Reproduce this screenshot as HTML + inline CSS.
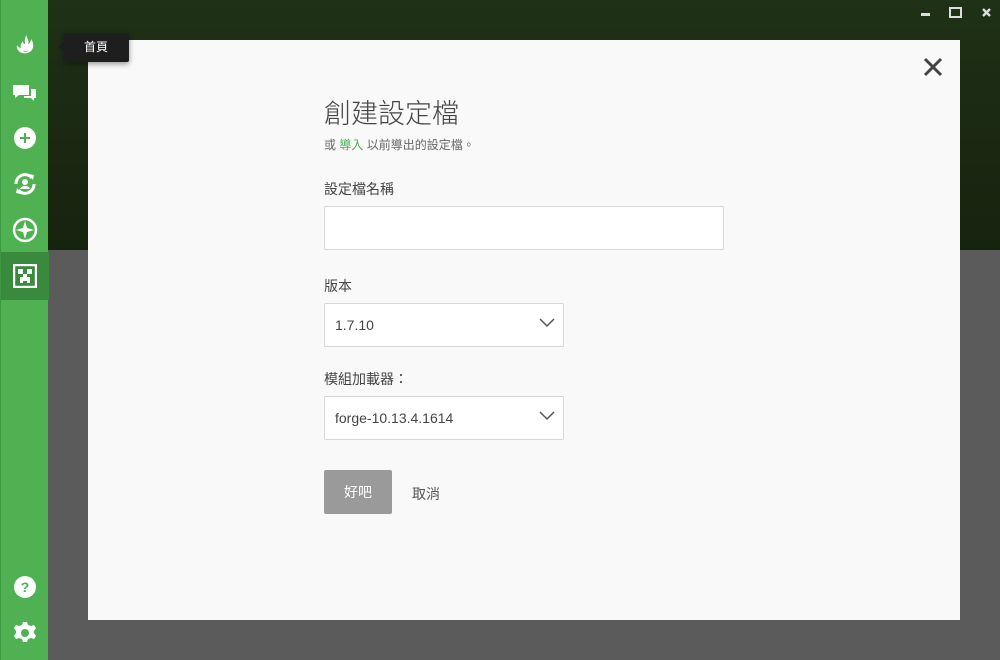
<!DOCTYPE html>
<html><head><meta charset="utf-8"><style>
*{margin:0;padding:0;box-sizing:border-box}
body{width:1000px;height:660px;overflow:hidden;position:relative;background:#5b5b5b;font-family:"Liberation Sans","Noto Sans CJK TC",sans-serif}
.top{position:absolute;left:0;top:0;width:1000px;height:250px;background:linear-gradient(180deg,#1f3117 0%,#1a2812 60%,#16230f 100%)}
.side{position:absolute;left:0;top:0;width:48px;height:660px;background:#4fb152;border-left:1px solid #3e9a41}
.ic{position:absolute;left:0;width:48px;height:46px;display:flex;align-items:center;justify-content:center}
.sel{background:#3a8a3d}
.tip{position:absolute;z-index:5;left:64px;top:33px;width:65px;height:29px;background:#1e1e1e;color:#fff;font-size:12px;line-height:29px;padding-left:20px;border-radius:2px;box-shadow:0 2px 6px rgba(0,0,0,.4)}
.tip:before{content:"";position:absolute;left:-6px;top:8px;border:6px solid transparent;border-left:0;border-right-color:#1e1e1e}
.modal{position:absolute;left:88px;top:40px;width:872px;height:580px;background:#f9f9f9}
h1{position:absolute;left:236px;top:52px;font-size:27px;font-weight:300;color:#444}
.sub{position:absolute;left:236px;top:96px;font-size:12px;color:#666}
.sub b{color:#4caf50;font-weight:normal}
.lbl{position:absolute;left:236px;font-size:14px;color:#444}
.inp{position:absolute;left:236px;background:#fff;border:1px solid #d8d8d8;border-radius:2px;font-size:14px;color:#444;padding-left:10px;display:flex;align-items:center}
.chev{position:absolute;right:8px;top:14px}
.btn{position:absolute;left:236px;top:430px;width:68px;height:44px;background:#9a9a9a;color:#fff;font-size:14px;line-height:44px;text-align:center;border-radius:2px}
.cancel{position:absolute;left:324px;top:444px;font-size:14px;color:#555}
</style></head><body>
<div class="top"></div>
<svg style="position:absolute;left:918px;top:6px" width="80" height="16"><rect x="3" y="7" width="9" height="3" fill="#ddd"/><rect x="32" y="2" width="11" height="9" fill="none" stroke="#ddd" stroke-width="2"/><path d="M65 3l7 7M72 3l-7 7" stroke="#ddd" stroke-width="2.4"/></svg>
<div class="side">
<div class="ic" style="top:23px"><svg width="24" height="28" viewBox="0 0 24 28"><path d="M14 2c-2 3 3 6 1 10 2-1 3-3 3-5 3 4 3 9 0 12-2 2-6 3-9 2-3-1-6-4-5-8 1 2 3 3 4 3-1-2 0-5 2-7 0 2 1 3 2 3 0-3-1-5 2-10z" fill="#fff"/><path d="M10 18c1 2 4 2 5 0-1 3-4 3-5 0z" fill="#4fb152"/></svg></div>
<div class="ic" style="top:71px"><svg width="26" height="22" viewBox="0 0 26 22"><path d="M1 2h16v10H7l-4 3v-3H1z" fill="#fff"/><path d="M19 6h5v9h-2v3l-3-3h-7v-2h7z" fill="#fff"/></svg></div>
<div class="ic" style="top:115px"><svg width="24" height="24"><circle cx="12" cy="12" r="11" fill="#fff"/><path d="M12 7v10M7 12h10" stroke="#4fb152" stroke-width="2"/></svg></div>
<div class="ic" style="top:161px"><svg width="26" height="26" viewBox="0 0 26 26"><path d="M4 13a9 9 0 0 1 16-6M22 13a9 9 0 0 1-16 6" stroke="#fff" stroke-width="3" fill="none"/><path d="M17 3l5 1-1 5zM9 23l-5-1 1-5z" fill="#fff"/><circle cx="13" cy="11" r="3" fill="#fff"/><path d="M8 18c1-4 9-4 10 0z" fill="#fff"/></svg></div>
<div class="ic" style="top:207px"><svg width="26" height="26"><circle cx="13" cy="13" r="11" stroke="#fff" stroke-width="2.5" fill="none"/><path d="M13 4l2 7 7 2-7 2-2 7-2-7-7-2 7-2z" fill="#fff"/></svg></div>
<div class="ic sel" style="top:252px;height:48px"><svg width="24" height="24"><rect x="1" y="1" width="22" height="22" fill="none" stroke="#fff" stroke-width="2.4"/><rect x="5" y="5" width="5" height="5" fill="#fff"/><rect x="14" y="5" width="5" height="5" fill="#fff"/><path d="M10 10h4v3h3v6h-3v-2h-4v2H7v-6h3z" fill="#fff"/></svg></div>
<div class="ic" style="top:564px"><svg width="24" height="24"><circle cx="12" cy="12" r="11" fill="#fff"/><text x="12" y="17" font-size="14" font-weight="bold" text-anchor="middle" fill="#4fb152" font-family="Liberation Sans">?</text></svg></div>
<div class="ic" style="top:610px"><svg width="24" height="24" viewBox="0 0 24 24"><path d="M10 1h4l1 3 3 1 3-1 2 3-2 3v2l2 3-2 3-3-1-3 1-1 3h-4l-1-3-3-1-3 1-2-3 2-3v-2L1 7l2-3 3 1 3-1z" fill="#fff"/><circle cx="12" cy="12" r="4" fill="#4fb152"/></svg></div>
</div>
<div class="modal">
<svg style="position:absolute;left:834px;top:16px" width="22" height="22"><path d="M3 3l16 16M19 3L3 19" stroke="#444" stroke-width="3"/></svg>
<h1>創建設定檔</h1>
<div class="sub">或 <b>導入</b> 以前導出的設定檔。</div>
<div class="lbl" style="top:139px">設定檔名稱</div>
<div class="inp" style="top:166px;width:400px;height:44px"></div>
<div class="lbl" style="top:236px">版本</div>
<div class="inp" style="top:263px;width:240px;height:44px">1.7.10<svg class="chev" width="16" height="10"><path d="M1 1l7 7 7-7" stroke="#555" stroke-width="1.5" fill="none"/></svg></div>
<div class="lbl" style="top:329px">模組加載器：</div>
<div class="inp" style="top:356px;width:240px;height:44px">forge-10.13.4.1614<svg class="chev" width="16" height="10"><path d="M1 1l7 7 7-7" stroke="#555" stroke-width="1.5" fill="none"/></svg></div>
<div class="btn">好吧</div>
<div class="cancel">取消</div>
</div>
<div class="tip">首頁</div>
</body></html>
